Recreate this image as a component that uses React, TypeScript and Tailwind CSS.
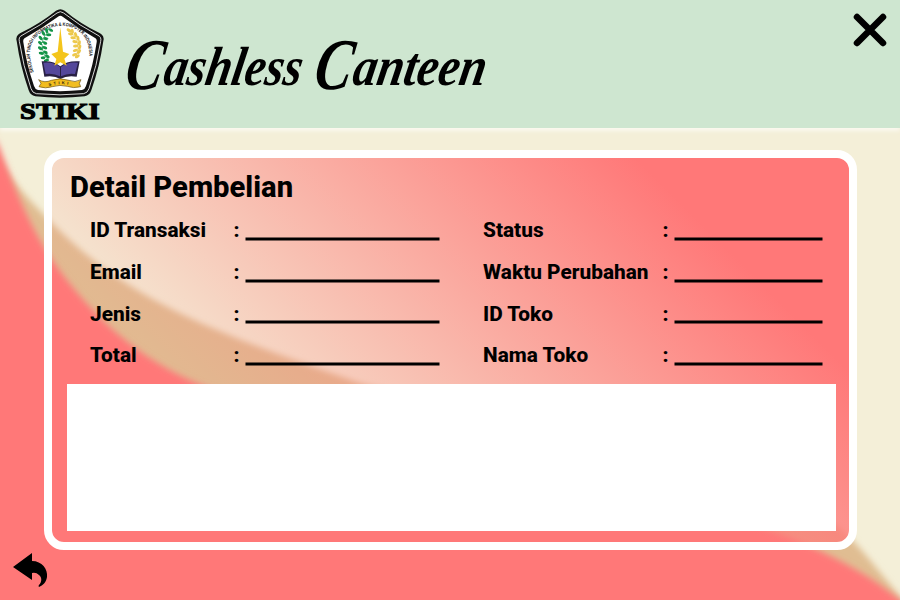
import React from "react";

const leftFields = ["ID Transaksi", "Email", "Jenis", "Total"];
const rightFields = ["Status", "Waktu Perubahan", "ID Toko", "Nama Toko"];

function Leaf({ x, y, r, fill }: { x: number; y: number; r: number; fill: string }) {
  return <ellipse cx={x} cy={y} rx="8" ry="4.5" fill={fill} transform={`rotate(${r} ${x} ${y})`} />;
}

function Logo() {
  const green: number[][] = [
    [152, 90, 25], [140, 92, 75], [146, 104, 0], [130, 100, 60], [138, 116, 10], [122, 114, 50],
    [134, 129, 15], [121, 129, 35], [134, 143, 20], [121, 145, 30], [137, 157, 25], [124, 160, 10],
    [142, 169, 35], [130, 173, 0], [139, 181, -20],
  ];
  const gold: number[][] = [
    [207, 91, 30], [217, 94, 80], [212, 102, 10], [227, 104, 70], [219, 113, 5], [234, 115, 80],
    [225, 125, 10], [238, 129, 100], [227, 138, -5], [239, 142, 110], [226, 151, -15], [237, 155, 130],
    [224, 164, -20], [232, 169, 150],
  ];
  return (
    <svg className="h-32 w-[120px] shrink-0" viewBox="0 0 360 384" aria-label="STIKI">
      <path
        d="M168 32Q181 23 194 32Q238 69 300 100Q314 108 310 123Q299 200 274 271Q269 286 254 289Q180 297 106 289Q91 286 86 271Q61 200 50 123Q46 108 60 100Q122 69 168 32Z"
        fill="#111"
      />
      <path
        d="M171 39Q181 31 191 39Q237 76 294 106Q305 111 302 124Q291 197 267 266Q263 279 251 281Q180 288 109 281Q97 279 93 266Q69 197 58 124Q55 111 66 106Q123 76 171 39Z"
        fill="#111" stroke="#fff" strokeWidth="2.5"
      />
      <path
        d="M174 50Q181 44 188 50Q234 85 284 113Q292 117 290 127Q280 195 258 258Q255 268 246 270Q180 277 114 270Q105 268 102 258Q80 195 70 127Q68 117 76 113Q126 85 174 50Z"
        fill="#fff"
      />
      <path id="motto" d="M101 217C84 165 86 132 112 108C152 70 211 67 244 101C270 127 275 165 257 219" fill="none" />
      <text className="font-['Liberation_Sans'] font-bold" fontSize="14.5" fill="#111">
        <textPath href="#motto" textLength="336" lengthAdjust="spacingAndGlyphs">SEKOLAH TINGGI INFORMATIKA &amp; KOMPUTER INDONESIA</textPath>
      </text>
      <path d="M155 88Q118 112 128 150Q131 168 146 183" fill="none" stroke="#139447" strokeWidth="2" />
      {green.map(([x, y, r], i) => <Leaf key={i} x={x} y={y} r={r} fill="#139447" />)}
      {green.filter((_, i) => i % 3 === 1).map(([x, y], i) => <circle key={i} cx={x + 7} cy={y + 2} r="2.5" fill="#fff" />)}
      <path d="M201 88Q249 118 228 172" fill="none" stroke="#edc84b" strokeWidth="2" />
      {gold.map(([x, y, r], i) => <Leaf key={i} x={x} y={y} r={r} fill="#edc84b" />)}
      <path d="M125 184L133 230Q162 225 181 237Q201 225 230 230L239 184Q201 181 181 199Q161 181 125 184Z" fill="#282044" />
      <path d="M130 188Q160 184 180 201V229Q160 218 137 222Z" fill="#54479b" />
      <path d="M234 188Q203 184 183 201V229Q204 218 225 222Z" fill="#54479b" />
      <path d="M181 82L189 155L208 162L193 176L200 197L181 187L163 197L169 177L154 162L173 155Z" fill="#f4c51c" />
      <path
        d="M116 239Q134 250 154 241Q180 232 207 241Q225 249 243 239L238 250L242 260Q220 266 202 259Q180 253 157 260Q136 267 117 260L123 250Z"
        fill="#f2bd20" stroke="#665016" strokeWidth="2"
      />
      <path id="ribbon" d="M147 258Q180 247 216 257" fill="none" />
      <text className="font-['Liberation_Sans'] font-bold" fontSize="12" fill="#111">
        <textPath href="#ribbon" textLength="58">STIKI</textPath>
      </text>
      <text
        x="60" y="356" className="font-['Liberation_Serif'] font-bold" fontSize="72" fill="#000"
        stroke="#000" strokeWidth="3.5" textLength="239" lengthAdjust="spacingAndGlyphs"
      >STIKI</text>
    </svg>
  );
}

function Wordmark() {
  return (
    <svg className="h-32 w-[400px] shrink-0" viewBox="120 0 400 128" fill="#000">
      <g className="font-['Liberation_Serif'] font-bold italic">
        <text transform="translate(123 89) skewX(-10) scale(.76 1)" fontSize="73">C</text>
        <text transform="translate(162 85) skewX(-10) scale(.85 1)" fontSize="55">ashless</text>
        <text transform="translate(312 89) skewX(-10) scale(.76 1)" fontSize="73">C</text>
        <text transform="translate(351 85) skewX(-10) scale(.87 1)" fontSize="55">anteen</text>
      </g>
    </svg>
  );
}

function Backdrop() {
  return (
    <svg className="absolute inset-0 h-full w-full" viewBox="0 0 900 600">
      <defs>
        <filter id="soft" x="-10%" y="-10%" width="120%" height="120%">
          <feGaussianBlur stdDeviation="3" />
        </filter>
      </defs>
      <rect width="900" height="600" fill="#f4efd8" />
      <path
        d="M-30 110L0 160C16 188 32 202 55 226C140 312 250 343 362 384C540 430 735 440 842 530C870 556 885 582 930 630H-30Z"
        fill="#e0bd92" filter="url(#soft)"
      />
      <path
        d="M-30 100L-1 146C15 190 31 230 55 264C90 313 135 358 203 386C400 456 640 476 800 542C842 560 872 577 900 600L940 640H-40Z"
        fill="#ff7878" filter="url(#soft)"
      />
    </svg>
  );
}

function Field({ label, labelClass, lineClass }: { label: string; labelClass: string; lineClass: string }) {
  return (
    <div className="flex h-[41.7px] items-start">
      <span className={`${labelClass} whitespace-nowrap`}>{label}</span>
      <span className="w-3">:</span>
      <span className={`${lineClass} mt-[17.6px] h-[2px] bg-black shadow-[0_0_0_0.5px_#000]`} />
    </div>
  );
}

export default function App() {
  return (
    <div className="relative h-[600px] w-[900px] overflow-hidden font-['Roboto',sans-serif] text-black">
      <Backdrop />
      <div className="relative flex h-full flex-col">
        <header className="flex h-32 shrink-0 bg-[#cee6d0] shadow-[0_3px_4px_rgba(255,255,255,0.6)]">
          <Logo />
          <Wordmark />
          <button aria-label="Close" className="mt-3 mr-3 ml-auto h-9 w-9">
            <svg viewBox="0 0 36 36" className="h-9 w-9" stroke="#000" strokeWidth="6.5" strokeLinecap="round">
              <path d="M5 5L31 31M31 5L5 31" />
            </svg>
          </button>
        </header>
        <main className="mt-[22px] ml-11 h-[400px] w-[813px] shrink-0 rounded-[20px] border-[8px] border-white bg-[linear-gradient(45deg,#ff787800_21%,#ff7878_82%)] bg-origin-padding pt-[14px] pl-[15px]">
          <h1 className="ml-[3px] h-[48.4px] text-[29.2px] leading-[30px] font-extrabold">Detail Pembelian</h1>
          <section className="ml-[23px] flex h-[163.6px] text-[20.8px] leading-[21px] font-extrabold">
            <div className="w-[393px]">
              {leftFields.map((label) => (
                <Field key={label} label={label} labelClass="w-[143.5px]" lineClass="w-[193px]" />
              ))}
            </div>
            <div>
              {rightFields.map((label) => (
                <Field key={label} label={label} labelClass="w-[179.5px]" lineClass="w-[147px]" />
              ))}
            </div>
          </section>
          <div className="h-[147px] w-[769px] bg-white" />
        </main>
        <button aria-label="Back" className="mt-[3px] ml-3 h-9 w-9">
          <svg viewBox="0 0 36 36" className="h-9 w-9">
            <path d="M1 14L20 0V8C30 8 36 16 35 24C34 30 31 32 27 34Q26 33 27 32C30 29 30 24 27 22Q24 19 20 20V27Z" />
          </svg>
        </button>
      </div>
    </div>
  );
}
